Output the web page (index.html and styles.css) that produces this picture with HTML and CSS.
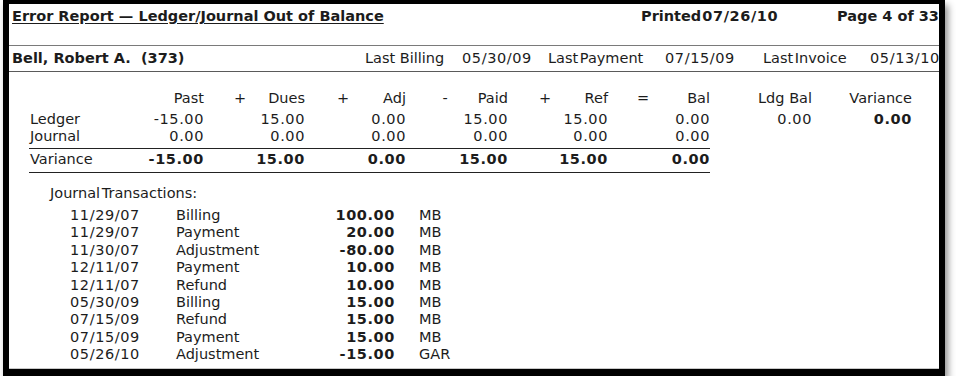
FILE: index.html
```html
<!DOCTYPE html>
<html>
<head>
<meta charset="utf-8">
<title>Error Report</title>
<link rel="stylesheet" href="styles.css">
</head>
<body>
<div class="frame">
  <div class="title-row">
    <div class="title">Error Report — Ledger/Journal Out of Balance</div>
    <div class="printed">Printed <span class="d">07/26/10</span></div>
    <div class="page">Page 4 of 33</div>
  </div>
  <div class="acct-row">
    <div class="acct-name">Bell, Robert A.&nbsp; (373)</div>
    <div>Last Billing</div>
    <div class="d">05/30/09</div>
    <div class="tight">Last Payment</div>
    <div class="d">07/15/09</div>
    <div class="tight">Last Invoice</div>
    <div class="d">05/13/10</div>
  </div>

  <div class="summary">
    <div class="hdr"></div>
    <div class="hdr num">Past</div>
    <div class="hdr seg"><span class="op o1">+</span><span>Dues</span></div>
    <div class="hdr seg"><span class="op o2">+</span><span>Adj</span></div>
    <div class="hdr seg"><span class="op o3">-</span><span>Paid</span></div>
    <div class="hdr seg"><span class="op o4">+</span><span>Ref</span></div>
    <div class="hdr seg"><span class="op o5">=</span><span>Bal</span></div>
    <div class="hdr num">Ldg Bal</div>
    <div class="hdr num">Variance</div>

    <div class="lbl gap">Ledger</div>
    <div class="num d gap">-15.00</div>
    <div class="num d gap">15.00</div>
    <div class="num d gap">0.00</div>
    <div class="num d gap">15.00</div>
    <div class="num d gap">15.00</div>
    <div class="num d gap">0.00</div>
    <div class="num d gap">0.00</div>
    <div class="num d gap b">0.00</div>

    <div class="lbl rule1">Journal</div>
    <div class="num d rule1">0.00</div>
    <div class="num d rule1">0.00</div>
    <div class="num d rule1">0.00</div>
    <div class="num d rule1">0.00</div>
    <div class="num d rule1">0.00</div>
    <div class="num d rule1">0.00</div>
    <div></div>
    <div></div>

    <div class="lbl rule2">Variance</div>
    <div class="num d rule2 b">-15.00</div>
    <div class="num d rule2 b">15.00</div>
    <div class="num d rule2 b">0.00</div>
    <div class="num d rule2 b">15.00</div>
    <div class="num d rule2 b">15.00</div>
    <div class="num d rule2 b">0.00</div>
  </div>

  <div class="jt-label tight">Journal Transactions:</div>
  <div class="jt">
    <div class="d">11/29/07</div><div>Billing</div><div class="amt d">100.00</div><div>MB</div>
    <div class="d">11/29/07</div><div>Payment</div><div class="amt d">20.00</div><div>MB</div>
    <div class="d">11/30/07</div><div>Adjustment</div><div class="amt d">-80.00</div><div>MB</div>
    <div class="d">12/11/07</div><div>Payment</div><div class="amt d">10.00</div><div>MB</div>
    <div class="d">12/11/07</div><div>Refund</div><div class="amt d">10.00</div><div>MB</div>
    <div class="d">05/30/09</div><div>Billing</div><div class="amt d">15.00</div><div>MB</div>
    <div class="d">07/15/09</div><div>Refund</div><div class="amt d">15.00</div><div>MB</div>
    <div class="d">07/15/09</div><div>Payment</div><div class="amt d">15.00</div><div>MB</div>
    <div class="d">05/26/10</div><div>Adjustment</div><div class="amt d">-15.00</div><div>GAR</div>
  </div>
</div>
</body>
</html>
```

FILE: styles.css
```css
html, body {
  margin: 0;
  padding: 0;
  background: #fff;
}
body {
  font-family: "DejaVu Sans", Verdana, sans-serif;
  font-size: 14.5px;
  color: #1c1c1c;
}
.frame {
  margin-left: 3px;
  width: 930px;
  height: 365px;
  border: 6px solid #000;
  border-top-width: 4px;
  border-bottom-width: 7px;
  box-shadow: 3px 5px 7px rgba(0, 0, 0, 0.45), inset 0 -1px 0 #c8c8c8;
  overflow: hidden;
  background: #fff;
}
.d {
  letter-spacing: 0.6px;
}
.title-row {
  box-sizing: border-box;
  height: 42px;
  padding: 4px 0 0 3px;
  line-height: 16px;
  border-bottom: 1px solid #7a7a7a;
  display: grid;
  grid-template-columns: 629px 196px auto;
  font-weight: bold;
  white-space: nowrap;
}
.title {
  text-decoration: underline;
  text-underline-offset: 2px;
}
.printed {
  word-spacing: -4px;
}
.acct-row {
  box-sizing: border-box;
  height: 26px;
  padding-left: 3px;
  line-height: 25px;
  border-bottom: 1px solid #5a5a5a;
  display: grid;
  grid-template-columns: 353px 97px 86px 117px 98px 107px auto;
  white-space: nowrap;
}
.acct-name {
  font-weight: bold;
}
.tight {
  word-spacing: -3px;
}
.summary {
  margin: 18px 0 0 20px;
  display: grid;
  grid-template-columns: 105px 70px 101px 101px 102px 100px 102px 102px 100px;
  line-height: 17px;
  white-space: nowrap;
}
.num {
  text-align: right;
}
.seg {
  display: flex;
  justify-content: space-between;
}
.op {
  width: 12px;
  text-align: center;
}
.o1 { margin-left: 30px; }
.o2 { margin-left: 32px; }
.o3 { margin-left: 33px; }
.o4 { margin-left: 31px; }
.o5 { margin-left: 29px; }
.gap {
  padding-top: 4px;
}
.lbl {
  padding-left: 1px;
}
.rule1 {
  padding-bottom: 3px;
  border-bottom: 1px solid #222;
}
.rule2 {
  padding-top: 2px;
  padding-bottom: 4px;
  border-bottom: 1px solid #222;
}
.b {
  font-weight: bold;
}
.jt-label {
  margin: 12px 0 0 41px;
  line-height: 17px;
}
.jt {
  margin: 5px 0 0 61px;
  display: grid;
  grid-template-columns: 106px 154px 65px auto;
  line-height: 17.4px;
  white-space: nowrap;
}
.jt > div:nth-child(4n+4) {
  padding-left: 24px;
}
.amt {
  text-align: right;
  font-weight: bold;
}
```
